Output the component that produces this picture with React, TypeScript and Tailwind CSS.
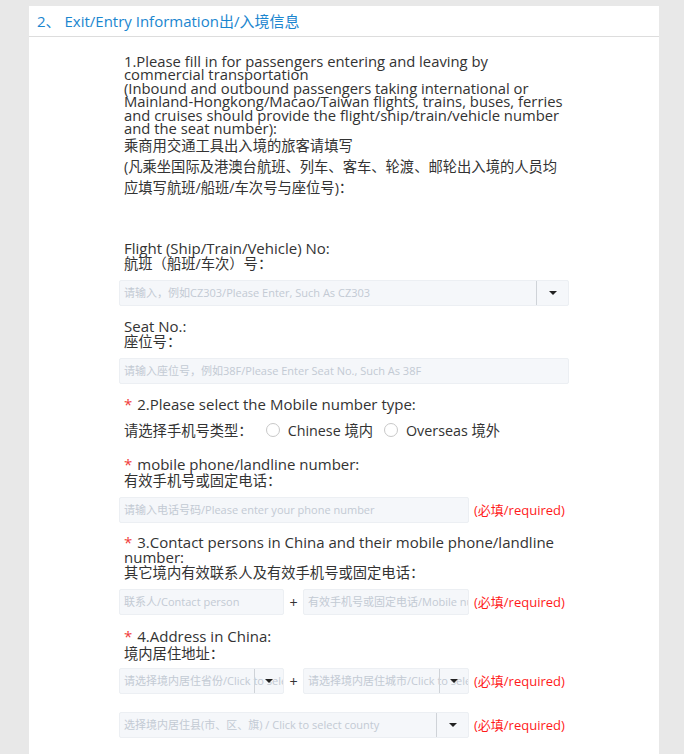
const font = { fontFamily: '"Open Sans", "Noto Sans CJK SC", sans-serif' };

function Caret() {
  return (
    <svg width="8" height="4" viewBox="0 0 8 4" className="block">
      <path d="M0 0 L8 0 L4 4 Z" fill="#222" />
    </svg>
  );
}

function Field({ placeholder, width, select, btnWidth = 32 }: { placeholder: string; width: string; select?: boolean; btnWidth?: number }) {
  return (
    <div className={`relative h-[26px] ${width} shrink-0 rounded-[2px] border border-[#eceff3] bg-[#f5f7fa] overflow-hidden`}>
      <div className="absolute inset-0 flex items-center pl-[4px] whitespace-nowrap overflow-hidden text-[11px] text-[#c3cad4]">
        {placeholder}
      </div>
      {select && (
        <div
          className="absolute right-0 top-0 bottom-0 flex items-center justify-center border-l border-[#cfd3d8]"
          style={{ width: btnWidth }}
        >
          <Caret />
        </div>
      )}
    </div>
  );
}

function Required() {
  return <span className="ml-[5px] shrink-0 text-[13px] text-[#ff1a1a] whitespace-nowrap">(必填/required)</span>;
}

function Star() {
  return <span className="text-[#f03a3a] mr-[5px]">*</span>;
}

export default function App() {
  return (
    <div className="min-h-[754px] bg-[#e8e8e8] pt-[6px]" style={font}>
      <div className="ml-[29px] w-[630px] min-h-[748px] bg-white">
        <div className="h-[31px] border-b border-[#dddddd] pl-[8px] flex items-center text-[15px] text-[#1b86cf]">
          2、 Exit/Entry Information出/入境信息
        </div>

        <div className="pl-[90px] pr-[90px] pt-[18px] text-[#333] text-[14.3px]">
          <div className="pl-[5px]">
            <div className="leading-[13.4px] text-[14.8px]">
              1.Please fill in for passengers entering and leaving by commercial transportation
              <br />
              (Inbound and outbound passengers taking international or Mainland-Hongkong/Macao/Taiwan flights, trains, buses, ferries and cruises should provide the flight/ship/train/vehicle number and the seat number):
            </div>
            <div className="leading-[20px] mt-[1px]">乘商用交通工具出入境的旅客请填写</div>
            <div className="leading-[21px]">(凡乘坐国际及港澳台航班、列车、客车、轮渡、邮轮出入境的人员均应填写航班/船班/车次号与座位号)：</div>
          </div>

          <div className="pl-[5px] mt-[42px] leading-[16px]">
            <div className="text-[15px]">Flight (Ship/Train/Vehicle) No:</div>
            <div>航班（船班/车次）号：</div>
          </div>
          <div className="mt-[8px]">
            <Field placeholder="请输入，例如CZ303/Please Enter, Such As CZ303" width="w-[450px]" select />
          </div>

          <div className="pl-[5px] mt-[12px] leading-[16px]">
            <div className="text-[15px]">Seat No.:</div>
            <div>座位号：</div>
          </div>
          <div className="mt-[8px]">
            <Field placeholder="请输入座位号，例如38F/Please Enter Seat No., Such As 38F" width="w-[450px]" />
          </div>

          <div className="pl-[5px] mt-[12px] leading-[16px] text-[15px]">
            <Star />2.Please select the Mobile number type:
          </div>
          <div className="pl-[5px] mt-[8px] h-[20px] flex items-center">
            <span>请选择手机号类型：</span>
            <span className="ml-[13px] w-[14px] h-[14px] rounded-full border border-[#c8c8c8]" />
            <span className="ml-[8px]">Chinese 境内</span>
            <span className="ml-[11px] w-[14px] h-[14px] rounded-full border border-[#c8c8c8]" />
            <span className="ml-[8px]">Overseas 境外</span>
          </div>

          <div className="pl-[5px] mt-[16px] leading-[16.5px]">
            <div className="text-[15px]"><Star />mobile phone/landline number:</div>
            <div>有效手机号或固定电话：</div>
          </div>
          <div className="mt-[8px] flex items-center">
            <Field placeholder="请输入电话号码/Please enter your phone number" width="w-[350px]" />
            <Required />
          </div>

          <div className="pl-[5px] mt-[12px]">
            <div className="text-[15px] leading-[14.5px]"><Star />3.Contact persons in China and their mobile phone/landline number:</div>
            <div className="leading-[18px]">其它境内有效联系人及有效手机号或固定电话：</div>
          </div>
          <div className="mt-[7px] flex items-center">
            <Field placeholder="联系人/Contact person" width="w-[165px]" />
            <span className="w-[19px] shrink-0 text-center">+</span>
            <Field placeholder="有效手机号或固定电话/Mobile number" width="w-[166px]" />
            <Required />
          </div>

          <div className="pl-[5px] mt-[13px]">
            <div className="text-[15px] leading-[16px]"><Star />4.Address in China:</div>
            <div className="leading-[20px]">境内居住地址：</div>
          </div>
          <div className="mt-[4px] flex items-center">
            <Field placeholder="请选择境内居住省份/Click to select province" width="w-[165px]" select btnWidth={29} />
            <span className="w-[19px] shrink-0 text-center">+</span>
            <Field placeholder="请选择境内居住城市/Click to select city" width="w-[166px]" select btnWidth={29} />
            <Required />
          </div>

          <div className="mt-[18px] flex items-center">
            <Field placeholder="选择境内居住县(市、区、旗) / Click to select county" width="w-[350px]" select />
            <Required />
          </div>
        </div>
      </div>
    </div>
  );
}
